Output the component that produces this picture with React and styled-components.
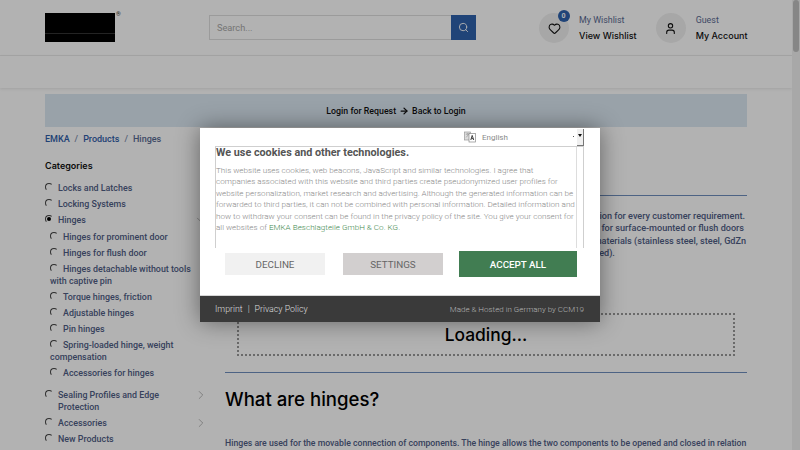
import React from 'react';
import styled, { createGlobalStyle } from 'styled-components';
import { Search, Heart, User, ChevronRight, ChevronDown, ArrowRight } from 'lucide-react';

const headFont = `Inter, "Noto Sans", sans-serif`;
const bodyFont = `Roboto, "Liberation Sans", sans-serif`;

const Global = createGlobalStyle`
  html, body { margin: 0; padding: 0; height: 450px; overflow: hidden; background: #fff; }
  * { box-sizing: border-box; }
  body { font-family: ${bodyFont}; }
`;

const Viewport = styled.div`
  position: relative;
  width: 800px;
  height: 450px;
  overflow: hidden;
`;
const Page = styled.div`
  width: 792px;
`;
const Scrollbar = styled.div`
  position: absolute;
  top: 0;
  right: 0;
  width: 8px;
  height: 450px;
  background: #f1f1f1;
`;
const Thumb = styled.div`
  width: 6px;
  height: 52px;
  margin-left: 1px;
  border-radius: 3px;
  background: #c1c1c1;
`;

const Header = styled.header`
  height: 56px;
  padding: 13px 45px 0;
  display: flex;
  border-bottom: 1px solid #ececec;
`;
const Logo = styled.div`
  position: relative;
  flex: none;
  width: 70px;
  height: 29px;
  background: linear-gradient(#000 0, #000 20px, #333 20px, #333 21px, #000 21px);
`;
const Reg = styled.span`
  position: absolute;
  left: 71px;
  top: -3px;
  font-size: 6px;
  color: #333;
`;
const SearchBox = styled.div`
  flex: none;
  margin: 2px 0 0 94px;
  width: 267px;
  height: 25px;
  display: flex;
`;
const SearchInput = styled.div`
  flex: 1;
  border: 1px solid #dfdfdf;
  border-right: 0;
  padding-left: 7px;
  font-size: 9.2px;
  line-height: 23px;
  color: #a8a8a8;
`;
const SearchBtn = styled.div`
  width: 25px;
  background: #2f62ac;
  color: #fff;
  display: flex;
  align-items: center;
  justify-content: center;
`;
const HeaderTool = styled.div`
  flex: none;
  display: flex;
  margin-left: ${p => p.$gap}px;
`;
const ToolCircle = styled.div`
  position: relative;
  width: 30px;
  height: 30px;
  border-radius: 50%;
  background: #f0f0f0;
  color: #111;
  display: flex;
  align-items: center;
  justify-content: center;
`;
const Badge = styled.span`
  position: absolute;
  top: -3px;
  right: -0.5px;
  width: 12px;
  height: 12px;
  border-radius: 50%;
  background: #2f62ac;
  color: #fff;
  font-size: 7px;
  font-weight: 700;
  line-height: 12px;
  text-align: center;
`;
const ToolText = styled.div`
  margin-left: 10px;
  padding-top: 1px;
  white-space: nowrap;
`;
const ToolTop = styled.div`
  font-size: 8.9px;
  line-height: 13px;
  color: #5a6a92;
`;
const ToolBottom = styled.div`
  margin-top: 2px;
  font-family: ${headFont};
  font-size: 9px;
  font-weight: 500;
  line-height: 14px;
  color: #111;
`;

const NavBar = styled.nav`
  height: 32px;
  box-shadow: 0 1px 3px rgba(0, 0, 0, 0.1);
`;

const Content = styled.main`
  padding: 6px 45px 0;
`;
const Banner = styled.div`
  height: 33px;
  background: #dce8f3;
  display: flex;
  align-items: center;
  justify-content: center;
  gap: 3px;
  font-size: 8.8px;
  font-weight: 500;
  color: #111;
`;
const Crumbs = styled.div`
  margin-top: 6px;
  height: 12px;
  display: flex;
  gap: 5px;
  font-size: 9px;
  font-weight: 500;
  line-height: 12px;
  color: #7b8aa8;
`;
const CrumbLink = styled.span`
  color: ${p => (p.$active ? '#5a6a92' : '#2f5da8')};
`;

const Columns = styled.div`
  display: flex;
  margin-top: 12px;
`;
const Sidebar = styled.aside`
  width: 160px;
  margin-right: 20px;
  flex: none;
`;
const SideTitle = styled.h4`
  margin: 0 0 5px;
  font-family: ${headFont};
  font-size: 9px;
  font-weight: 600;
  line-height: 18px;
  color: #111;
`;
const CatRow = styled.div`
  position: relative;
  min-height: 16px;
  padding: 2px 10px 2px ${p => (p.$sub ? '0' : '13px')};
  margin-left: ${p => (p.$sub ? '5px' : '0')};
  margin-top: ${p => p.$top || 0}px;
  text-indent: ${p => (p.$sub ? '13px' : '0')};
  font-size: 8.9px;
  font-weight: 500;
  line-height: 12px;
  color: #4f5d85;
`;
const Radio = styled.span`
  position: absolute;
  left: 0;
  top: 3px;
  width: 8px;
  height: 8px;
  border-radius: 50%;
  border: 1px solid transparent;
  border-top-color: #444;
  border-left-color: #444;
  &::after {
    content: '';
    display: ${p => (p.$on ? 'block' : 'none')};
    width: 4px;
    height: 4px;
    margin: 1px;
    border-radius: 50%;
    background: #000;
  }
`;
const Chevron = styled.span`
  position: absolute;
  right: -3px;
  top: 1px;
  color: #888;
  line-height: 0;
`;

const Main = styled.section`
  flex: 1;
  min-width: 0;
  padding-top: 38px;
`;
const Rule = styled.div`
  height: 1px;
  background: #6f8fbd;
`;
const Intro = styled.div`
  margin-top: 14px;
  font-size: 9.1px;
  font-weight: 500;
  line-height: 12.4px;
  color: #4f5d85;
`;
const IntroLine = styled.div`
  white-space: nowrap;
  text-align: ${p => (p.$left ? 'left' : 'right')};
  padding-right: ${p => p.$pad || 0}px;
`;
const LoadingBox = styled.div`
  margin: 53px 12px 16px;
  height: 43px;
  border: 2px dotted #999;
  display: flex;
  align-items: center;
  justify-content: center;
  font-family: ${headFont};
  font-size: 17.4px;
  font-weight: 500;
  color: #000;
`;
const Heading = styled.h2`
  margin: 14px 0 26px;
  font-family: ${headFont};
  font-size: 18.6px;
  font-weight: 500;
  line-height: 24px;
  color: #000;
`;
const Paragraph = styled.p`
  margin: 0;
  font-size: 8.7px;
  font-weight: 500;
  line-height: 12px;
  white-space: nowrap;
  color: #4f5d85;
`;

const Dim = styled.div`
  position: absolute;
  inset: 0;
  background: rgba(0, 0, 0, 0.3);
  display: flex;
  align-items: center;
  justify-content: center;
`;
const Modal = styled.div`
  width: 400px;
  height: 194px;
  background: #fff;
  display: flex;
  flex-direction: column;
  box-shadow: 0 0 22px rgba(0, 0, 0, 0.45);
`;
const ModalBody = styled.div`
  flex: 1;
  padding: 0 16px 0 15px;
`;
const LangRow = styled.div`
  position: relative;
  height: 18px;
  padding-left: 249px;
  display: flex;
  align-items: center;
  gap: 6px;
  font-size: 8px;
  color: #8a8a8a;
`;
const SelectArrow = styled.div`
  position: absolute;
  right: 0;
  top: 1px;
  width: 7px;
  height: 17px;
  background: #f0f0f0;
  border-right: 1px solid #777;
  border-bottom: 1px solid #777;
  &::before {
    content: '';
    position: absolute;
    left: 1px;
    top: 5px;
    border: 2px solid transparent;
    border-top: 3px solid #111;
  }
  &::after {
    content: '';
    position: absolute;
    left: -4px;
    top: 7px;
    width: 1px;
    height: 1px;
    background: #555;
  }
`;
const TextBox = styled.div`
  height: 102px;
  padding: 0 7px 0 0;
  border: 1px solid #cfcfcf;
  border-bottom: 0;
  position: relative;
  &::after {
    content: '';
    position: absolute;
    top: 0;
    bottom: 0;
    right: 6px;
    width: 1px;
    background: #ddd;
  }
`;
const BoxTitle = styled.h3`
  margin: 0;
  font-size: 10.8px;
  font-weight: 700;
  line-height: 12px;
  color: #555;
`;
const BoxText = styled.p`
  margin: 6px 0 0;
  font-size: 8.1px;
  font-weight: 300;
  letter-spacing: 0.01px;
  line-height: 11.4px;
  white-space: nowrap;
  color: #888;
`;
const BoxLink = styled.span`
  color: #3f8a50;
`;
const Buttons = styled.div`
  margin-top: 3px;
  padding-left: 10px;
  display: flex;
  align-items: center;
  height: 26px;
`;
const Btn = styled.div`
  width: ${p => p.$w}px;
  height: ${p => p.$h}px;
  margin-left: ${p => p.$ml || 0}px;
  background: ${p => p.$bg};
  color: ${p => p.$fg};
  font-size: 9.8px;
  font-weight: ${p => p.$fw || 400};
  display: flex;
  align-items: center;
  justify-content: center;
`;
const ModalFooter = styled.footer`
  height: 27px;
  padding: 0 16px 0 15px;
  border-top: 1px solid #d6d6d6;
  background: #3a3a3a;
  display: flex;
  align-items: center;
  justify-content: space-between;
  color: #ddd;
`;
const FootLinks = styled.div`
  display: flex;
  gap: 5px;
  font-size: 8.8px;
  font-weight: 300;
`;
const Credit = styled.div`
  font-size: 8px;
  font-weight: 300;
  color: #b5b5b5;
`;

// translate icon of the language picker
const LangIcon = () => (
  <svg width="12" height="12" viewBox="0 0 12 12" fill="none">
    <rect x="0.5" y="1" width="6" height="8" fill="#ddd" stroke="#999" strokeWidth="0.7" />
    <rect x="5" y="2.5" width="6.5" height="8.5" fill="#fff" stroke="#888" strokeWidth="0.7" />
    <path d="M6.8 9 L8.2 4.4 L9.7 9 M7.3 7.6 H9.2" stroke="#444" strokeWidth="1" />
    <path d="M1.8 3.2 H5 M3.4 2.2 V3.2 M2.2 6.4 L4.6 3.4" stroke="#888" strokeWidth="0.6" />
  </svg>
);

const topCats = [
  { label: 'Sealing Profiles and Edge Protection', top: 6 },
  { label: 'Accessories' },
];
const subCats = [
  'Hinges for prominent door',
  'Hinges for flush door',
  'Hinges detachable without tools with captive pin',
  'Torque hinges, friction',
  'Adjustable hinges',
  'Pin hinges',
  'Spring-loaded hinge, weight compensation',
  'Accessories for hinges',
];

export default function App() {
  return (
    <Viewport>
      <Global />
      <Page>
        <Header>
          <Logo><Reg>®</Reg></Logo>
          <SearchBox>
            <SearchInput>Search...</SearchInput>
            <SearchBtn><Search size={11} strokeWidth={2} /></SearchBtn>
          </SearchBox>
          <HeaderTool $gap={63}>
            <ToolCircle>
              <Heart size={13} strokeWidth={2} />
              <Badge>0</Badge>
            </ToolCircle>
            <ToolText>
              <ToolTop>My Wishlist</ToolTop>
              <ToolBottom>View Wishlist</ToolBottom>
            </ToolText>
          </HeaderTool>
          <HeaderTool $gap={19}>
            <ToolCircle><User size={13} strokeWidth={2} /></ToolCircle>
            <ToolText>
              <ToolTop>Guest</ToolTop>
              <ToolBottom>My Account</ToolBottom>
            </ToolText>
          </HeaderTool>
        </Header>
        <NavBar />
        <Content>
          <Banner>
            Login for Request <ArrowRight size={10} strokeWidth={3} /> Back to Login
          </Banner>
          <Crumbs>
            <CrumbLink>EMKA</CrumbLink>/<CrumbLink>Products</CrumbLink>/<CrumbLink $active>Hinges</CrumbLink>
          </Crumbs>
          <Columns>
            <Sidebar>
              <SideTitle>Categories</SideTitle>
              <CatRow><Radio />Locks and Latches</CatRow>
              <CatRow><Radio />Locking Systems</CatRow>
              <CatRow>
                <Radio $on />Hinges
                <Chevron><ChevronDown size={14} strokeWidth={1} /></Chevron>
              </CatRow>
              {subCats.map((label, ind) => (
                <CatRow $sub key={`sub-${ind}`} $top={ind === 0 ? 1 : 0}><Radio />{label}</CatRow>
              ))}
              {topCats.map((cat, ind) => (
                <CatRow key={`cat-${ind}`} $top={cat.top}>
                  <Radio />{cat.label}
                  <Chevron><ChevronRight size={14} strokeWidth={1} /></Chevron>
                </CatRow>
              ))}
              <CatRow><Radio />New Products</CatRow>
            </Sidebar>
            <Main>
              <Rule />
              <Intro>
                <IntroLine $pad={2}>EMKA offers the right hinge and the right hinge function for every customer requirement.</IntroLine>
                <IntroLine $pad={3}>Our range of hinges can be used and adjusted for surface-mounted or flush doors</IntroLine>
                <IntroLine $pad={1}>and is available in many versions and materials (stainless steel, steel, GdZn</IntroLine>
                <IntroLine $left>and plastic, painted or chromium-plated, or otherwise finished and coated in colour as required).</IntroLine>
              </Intro>
              <LoadingBox>Loading...</LoadingBox>
              <Rule />
              <Heading>What are hinges?</Heading>
              <Paragraph>Hinges are used for the movable connection of components. The hinge allows the two components to be opened and closed in relation</Paragraph>
            </Main>
          </Columns>
        </Content>
      </Page>
      <Scrollbar><Thumb /></Scrollbar>
      <Dim>
        <Modal>
          <ModalBody>
            <LangRow>
              <LangIcon />
              English
              <SelectArrow />
            </LangRow>
            <TextBox>
              <BoxTitle>We use cookies and other technologies.</BoxTitle>
              <BoxText>
                This website uses cookies, web beacons, JavaScript and similar technologies. I agree that<br />
                companies associated with this website and third parties create pseudonymized user profiles for<br />
                website personalization, market research and advertising. Although the generated information can be<br />
                forwarded to third parties, it can not be combined with personal information. Detailed information and<br />
                how to withdraw your consent can be found in the privacy policy of the site. You give your consent for<br />
                all websites of <BoxLink>EMKA Beschlagteile GmbH &amp; Co. KG.</BoxLink>
              </BoxText>
            </TextBox>
            <Buttons>
              <Btn $w={100} $h={22} $bg="#f1f1f1" $fg="#666">DECLINE</Btn>
              <Btn $w={100} $h={22} $ml={18} $bg="#d2cfcf" $fg="#666">SETTINGS</Btn>
              <Btn $w={118} $h={26} $ml={16} $bg="#417d52" $fg="#fff" $fw={500}>ACCEPT ALL</Btn>
            </Buttons>
          </ModalBody>
          <ModalFooter>
            <FootLinks><span>Imprint</span><span>|</span><span>Privacy Policy</span></FootLinks>
            <Credit>Made &amp; Hosted in Germany by CCM19</Credit>
          </ModalFooter>
        </Modal>
      </Dim>
    </Viewport>
  );
}
